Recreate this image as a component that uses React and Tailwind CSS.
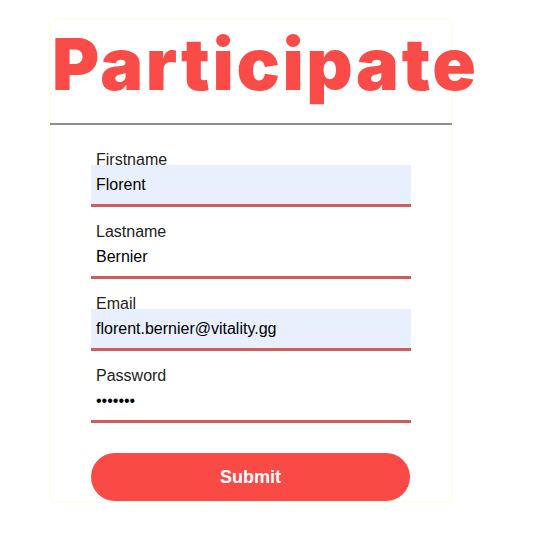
const fields = [
  { label: "Firstname", value: "Florent", type: "text", filled: true },
  { label: "Lastname", value: "Bernier", type: "text", filled: false },
  { label: "Email", value: "florent.bernier@vitality.gg", type: "email", filled: true },
  { label: "Password", value: "secret1", type: "password", filled: false },
];

function Field({ label, value, type, filled }) {
  return (
    <div className="flex flex-col">
      <label className="block h-4 leading-4 pl-[5px] text-base text-[#222]">{label}</label>
      <input
        type={type}
        defaultValue={value}
        readOnly
        className={
          "-mt-[3px] h-[42px] w-[320px] pl-[5px] text-base text-black outline-none border-b-[3px] border-[#d45b59] " +
          (filled ? "bg-[#e8f0fe]" : "bg-white")
        }
      />
    </div>
  );
}

export default function App() {
  return (
    <div className="min-h-[540px] bg-white font-['Liberation_Sans',Arial,sans-serif]">
      <div className="ml-[49px] pt-[18px]">
        <div className="w-[404px] h-[485px] border-2 border-[#fffdeb] rounded-lg pt-2">
          <h1 className="text-[72px] leading-[72px] font-black tracking-[2.6px] text-[#f94b48] whitespace-nowrap font-['Inter',sans-serif] ml-[1px]">
            Participate
          </h1>
          <hr className="mt-[23px] -mx-[1px] border-0 border-t-2 border-[#8e8e8e]" />
          <form className="mt-[27px] ml-[40px] flex flex-col gap-[17px]">
            {fields.map((f) => (
              <Field key={f.label} {...f} />
            ))}
            <button
              type="button"
              className="mt-[13px] h-12 w-[319px] rounded-full bg-[#f94a46] text-white font-bold text-lg"
            >
              Submit
            </button>
          </form>
        </div>
      </div>
    </div>
  );
}
